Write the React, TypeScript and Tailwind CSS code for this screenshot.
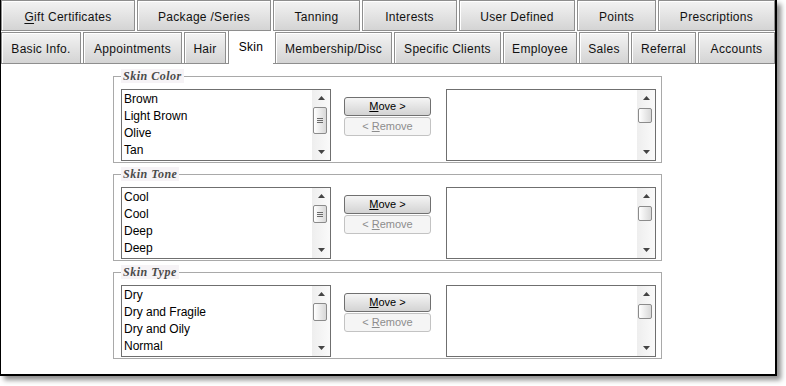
import type { ReactNode } from 'react'

type TabDef = { label: ReactNode; w: string; active?: boolean }

const topRow: TabDef[] = [
  {
    label: (
      <>
        <span className="underline underline-offset-2">G</span>ift Certificates
      </>
    ),
    w: 'w-[134px]',
  },
  { label: 'Package /Series', w: 'w-[134px]' },
  { label: 'Tanning', w: 'w-[87px]' },
  { label: 'Interests', w: 'w-[95px]' },
  { label: 'User Defined', w: 'w-[116px]' },
  { label: 'Points', w: 'w-[79px]' },
  { label: 'Prescriptions', w: 'w-[117px]' },
]

const bottomRow: TabDef[] = [
  { label: 'Basic Info.', w: 'w-[80px]' },
  { label: 'Appointments', w: 'w-[99px]' },
  { label: 'Hair', w: 'w-[42px]' },
  { label: 'Skin', w: 'w-[45px]', active: true },
  { label: 'Membership/Disc', w: 'w-[117px]' },
  { label: 'Specific Clients', w: 'w-[107px]' },
  { label: 'Employee', w: 'w-[74px]' },
  { label: 'Sales', w: 'w-[50px]' },
  { label: 'Referral', w: 'w-[65px]' },
  { label: 'Accounts', w: 'w-[77px]' },
]

const groups = [
  {
    title: 'Skin Color',
    items: ['Brown', 'Light Brown', 'Olive', 'Tan'],
    thumb: 'h-[27px]',
    grip: true,
  },
  {
    title: 'Skin Tone',
    items: ['Cool', 'Cool', 'Deep', 'Deep'],
    thumb: 'h-[18px]',
    grip: true,
  },
  {
    title: 'Skin Type',
    items: ['Dry', 'Dry and Fragile', 'Dry and Oily', 'Normal'],
    thumb: 'h-[18px]',
    grip: false,
  },
]

export default function App() {
  return (
    <div className="min-h-screen bg-white font-['Liberation_Sans',Arial,sans-serif] text-black">
      <div className="flex h-[376px] w-[777px] flex-col border-b-2 border-l border-r-2 border-black bg-white shadow-[4px_4px_5px_rgba(0,0,0,0.45)]">
        <div className="flex h-[31px] gap-[2px]">
          {topRow.map((t, i) => (
            <Tab key={i} tab={t} />
          ))}
        </div>
        <div className="flex items-end gap-[2px] border-b border-[#8e8e8e]">
          {bottomRow.map((t, i) => (
            <Tab key={i} tab={t} lower />
          ))}
        </div>
        <div className="flex flex-col gap-[11px] pl-[112px] pt-[12px]">
          {groups.map((g) => (
            <Picker key={g.title} {...g} />
          ))}
        </div>
      </div>
    </div>
  )
}

function Tab({ tab, lower }: { tab: TabDef; lower?: boolean }) {
  if (tab.active) {
    return (
      <div
        className={`${tab.w} -mb-px flex h-[33px] flex-none items-center justify-center border-l border-[#8e8e8e] bg-white pb-[1px] text-[12px] tracking-[0.3px]`}
      >
        {tab.label}
      </div>
    )
  }
  return (
    <div
      className={`${tab.w} flex h-[31px] flex-none items-center justify-center border border-[#8e8e8e] bg-gradient-to-b from-[#f3f3f3] to-[#d4d4d4] pt-[2px] text-[12px] tracking-[0.3px] text-[#111] shadow-[inset_1px_1px_0_#ffffff] ${lower ? 'border-b-0' : ''}`}
    >
      {tab.label}
    </div>
  )
}

function Picker({
  title,
  items,
  thumb,
  grip,
}: {
  title: string
  items: string[]
  thumb: string
  grip: boolean
}) {
  return (
    <div role="group" className="flex h-[87px] w-[549px] flex-col border border-[#a9a9a9]">
      <div className="-mt-[8px] ml-[7px] w-fit bg-[#f6f3f6] px-[2px] font-['Liberation_Serif',serif] text-[12px] font-bold italic leading-[14px] tracking-[0.5px] text-[#4a4a4a]">
        {title}
      </div>
      <div className="mt-[6px] flex items-start pl-[7px]">
        <ListBox items={items} thumb={thumb} grip={grip} />
        <div className="ml-[13px] mt-[8px] flex w-[87px] flex-col gap-[1px]">
          <button className="h-[19px] w-[87px] rounded-[3px] border border-[#707070] bg-gradient-to-b from-[#f5f5f5] to-[#d3d3d3] text-[11px] leading-none text-black">
            <span className="underline underline-offset-1">M</span>ove &gt;
          </button>
          <button
            disabled
            className="h-[19px] w-[87px] rounded-[3px] border border-[#c3c3c3] bg-[#f5f5f5] text-[11px] leading-none text-[#8d8d8d]"
          >
            &lt; <span className="underline underline-offset-1">R</span>emove
          </button>
        </div>
        <div className="ml-[15px]">
          <ListBox items={[]} thumb="h-[15px]" grip={false} thumbOffset="mt-[2px]" />
        </div>
      </div>
    </div>
  )
}

function ListBox({
  items,
  thumb,
  grip,
  thumbOffset = 'mt-px',
}: {
  items: string[]
  thumb: string
  grip: boolean
  thumbOffset?: string
}) {
  return (
    <div className="flex h-[72px] w-[210px] border border-[#6f6f6f] bg-white">
      <ul className="flex-1 pl-[2px] pt-[1px] text-[12px] leading-[17px]">
        {items.map((it, i) => (
          <li key={i}>{it}</li>
        ))}
      </ul>
      <div className="flex w-[18px] flex-col bg-gradient-to-r from-[#eeeeee] to-[#fafafa]">
        <div className="flex h-[16px] items-center justify-center">
          <svg width="7" height="4" viewBox="0 0 7 4">
            <path d="M0 4 L3.5 0 L7 4Z" fill="#444" />
          </svg>
        </div>
        <div
          className={`${thumb} ${thumbOffset} ml-px flex w-[14px] flex-col items-center justify-center gap-[1px] rounded-[2px] border border-[#8b8b8b] bg-gradient-to-r from-white to-[#d8d8d8]`}
        >
          {grip ? (
            <>
              <span className="h-px w-[6px] bg-[#6b6b6b]" />
              <span className="h-px w-[6px] bg-[#6b6b6b]" />
              <span className="h-px w-[6px] bg-[#6b6b6b]" />
            </>
          ) : null}
        </div>
        <div className="flex-1" />
        <div className="flex h-[16px] items-center justify-center">
          <svg width="7" height="4" viewBox="0 0 7 4">
            <path d="M0 0 L7 0 L3.5 4Z" fill="#444" />
          </svg>
        </div>
      </div>
    </div>
  )
}
